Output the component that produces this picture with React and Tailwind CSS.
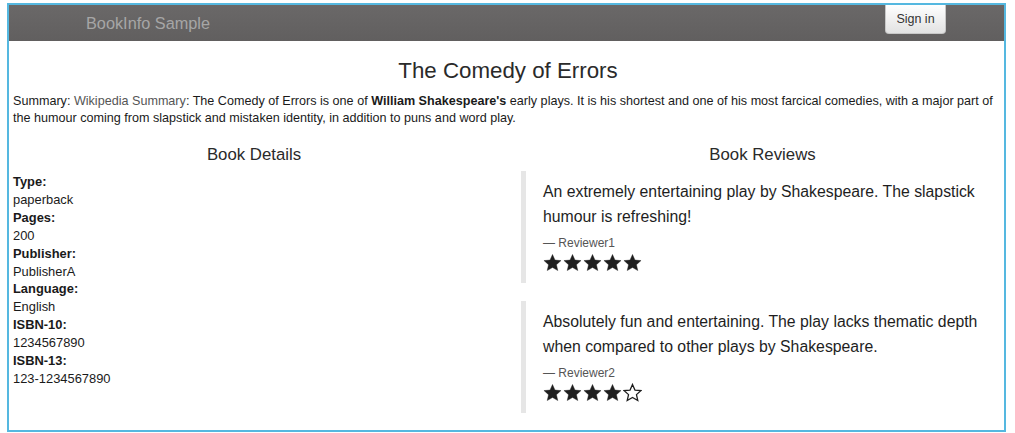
import React from "react";

function Star({ filled }) {
  return (
    <svg width="19" height="19" viewBox="0 0 24 24" className="block">
      <path
        d="M12 1.8l3.1 7.1 7.7.7-5.8 5.1 1.7 7.5L12 18.3l-6.7 3.9 1.7-7.5-5.8-5.1 7.7-.7z"
        fill={filled ? "#1e1e1e" : "none"}
        stroke="#1e1e1e"
        strokeWidth={filled ? 0.5 : 1.6}
        strokeLinejoin="miter"
      />
    </svg>
  );
}

function Review({ text, reviewer, stars }) {
  return (
    <div className="border-l-[5px] border-[#e6e6e6] pl-[17px] pt-[8px] pb-[11px]">
      <p className="text-[15.8px] leading-[25px] text-[#1e1e1e] pr-[10px]">{text}</p>
      <div className="mt-[6px] text-[12px] leading-[17px] text-[#555]">— {reviewer}</div>
      <div className="flex gap-[1px] mt-[1px]">
        {[0, 1, 2, 3, 4].map((i) => (
          <Star key={i} filled={i < stars} />
        ))}
      </div>
    </div>
  );
}

export default function App() {
  const details = [
    ["Type:", "paperback"],
    ["Pages:", "200"],
    ["Publisher:", "PublisherA"],
    ["Language:", "English"],
    ["ISBN-10:", "1234567890"],
    ["ISBN-13:", "123-1234567890"],
  ];
  return (
    <div
      className="w-[1015px] h-[433px] bg-white pt-[3px] pl-[7px]"
      style={{ fontFamily: '"Liberation Sans", Arial, sans-serif' }}
    >
      <div className="w-[999px] h-[429px] border-2 border-[#55b8e0] overflow-hidden">
        <div className="h-[36px] bg-gradient-to-b from-[#6a6868] to-[#615f5f] flex items-start justify-between">
          <div className="pl-[77px] pt-[8px] text-[16.3px] leading-[20px] text-[#a6a6a6]">
            BookInfo Sample
          </div>
          <div className="mr-[58px] w-[61px] h-[29px] rounded-b-[4px] border border-t-0 border-[#c8c8c8] bg-gradient-to-b from-[#ffffff] to-[#e2e2e2] flex items-center justify-center text-[12.5px] text-[#333]">
            Sign in
          </div>
        </div>

        <div className="pl-[4px] pr-[1px]">
          <h1 className="mt-[18px] text-center text-[22.3px] leading-[24px] text-[#2a2a2a]">
            The Comedy of Errors
          </h1>
          <p className="mt-[10px] text-[12.6px] leading-[17px] text-[#1a1a1a]">
            Summary: <span className="text-[#555]">Wikipedia Summary</span>: The Comedy of
            Errors is one of <b>William Shakespeare's</b> early plays. It is his shortest and one
            of his most farcical comedies, with a major part of the humour coming from slapstick
            and mistaken identity, in addition to puns and word play.
          </p>
        </div>

        <div className="flex mt-[18px]">
          <div className="w-[490px] px-[4px]">
            <h4 className="text-center text-[16.8px] leading-[20px] text-[#2a2a2a]">Book Details</h4>
            <dl className="mt-[8px] text-[12.9px] leading-[17.9px] text-[#1a1a1a]">
              {details.map(([k, v]) => (
                <React.Fragment key={k}>
                  <dt className="font-bold">{k}</dt>
                  <dd>{v}</dd>
                </React.Fragment>
              ))}
            </dl>
          </div>
          <div className="w-[483px] ml-[22px]">
            <h4 className="text-center text-[16.8px] leading-[20px] text-[#2a2a2a]">Book Reviews</h4>
            <div className="mt-[6px] flex flex-col gap-[18px]">
              <Review
                text="An extremely entertaining play by Shakespeare. The slapstick humour is refreshing!"
                reviewer="Reviewer1"
                stars={5}
              />
              <Review
                text="Absolutely fun and entertaining. The play lacks thematic depth when compared to other plays by Shakespeare."
                reviewer="Reviewer2"
                stars={4}
              />
            </div>
          </div>
        </div>
      </div>
    </div>
  );
}
